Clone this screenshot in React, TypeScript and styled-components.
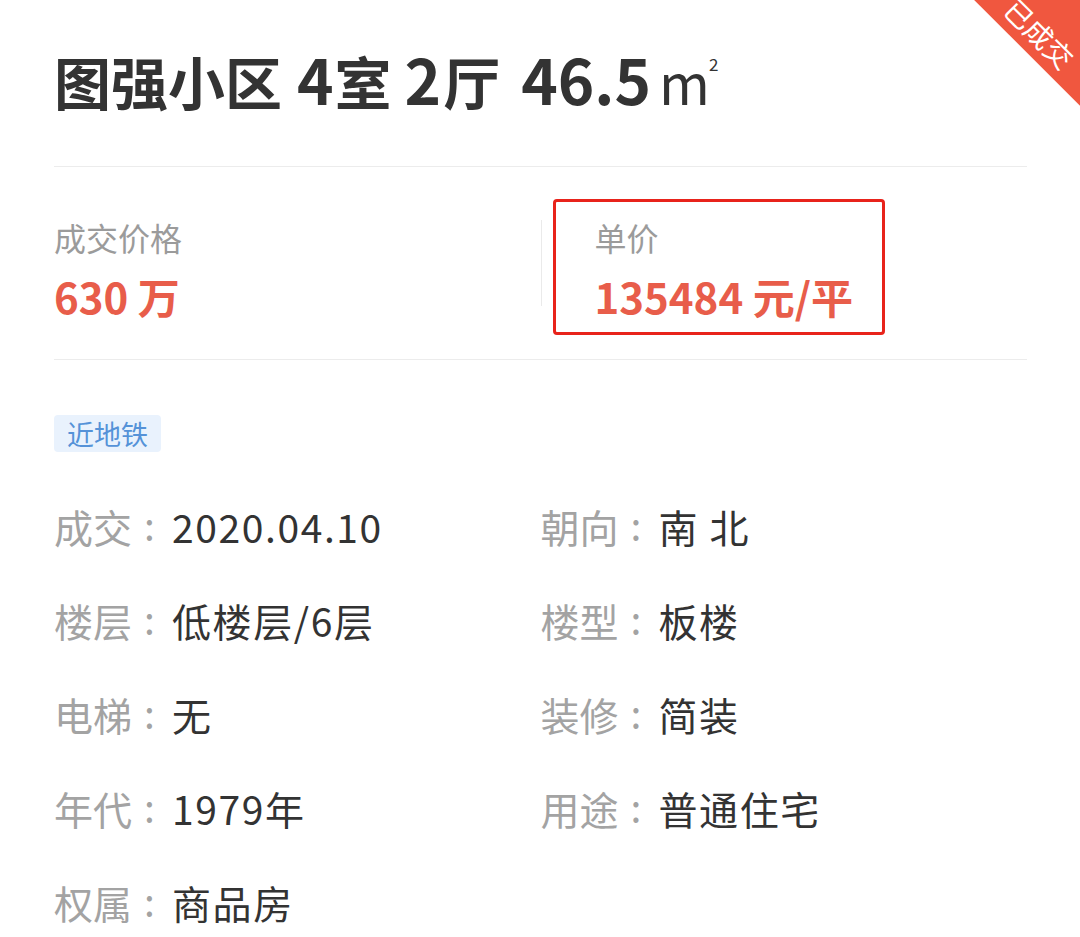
import React from "react";
import styled, { createGlobalStyle } from "styled-components";

const Global = createGlobalStyle`
  html, body { margin: 0; padding: 0; background: #ffffff; }
  body { font-family: "Noto Sans CJK SC", "Noto Sans", sans-serif; color: #333; }
`;

const Page = styled.div`
  position: relative;
  width: 1080px;
  min-height: 937px;
  overflow: hidden;
  background: #fff;
`;

const Content = styled.div`
  margin: 0 53px 0 54px;
`;

const Header = styled.div`
  height: 167px;
  box-sizing: border-box;
  padding-bottom: 8px;
  display: flex;
  align-items: center;
  border-bottom: 1px solid #ececec;
`;

const Title = styled.h1`
  margin: 0;
  font-size: 57px;
  line-height: 66px;
  font-weight: 700;
  color: #333;
  white-space: nowrap;
`;

const Num = styled.span`
  font-size: 62px;
`;

const Gap = styled.span<{ $w: number }>`
  display: inline-block;
  width: ${(p) => p.$w}px;
`;

const Unit = styled.span`
  font-size: 55px;
  font-weight: 400;
`;

const Sup = styled.sup`
  font-size: 17px;
  font-weight: 400;
  vertical-align: top;
  position: relative;
  top: -14px;
  margin-left: -1px;
`;

const Stats = styled.div`
  height: 193px;
  box-sizing: border-box;
  padding-top: 50px;
  display: grid;
  grid-template-columns: 1fr 1fr;
  align-items: start;
  border-bottom: 1px solid #ececec;
`;

const StatCell = styled.div<{ $divided?: boolean; $marked?: boolean }>`
  position: relative;
  padding-left: ${(p) => (p.$divided ? "54px" : "0")};
  &::before {
    content: "";
    display: ${(p) => (p.$divided ? "block" : "none")};
    position: absolute;
    left: 0;
    top: 3px;
    height: 86px;
    border-left: 1px solid #eaeaea;
  }
  &::after {
    content: "";
    display: ${(p) => (p.$marked ? "block" : "none")};
    position: absolute;
    left: 12px;
    top: -18px;
    width: 332px;
    height: 136px;
    box-sizing: border-box;
    border: 3px solid #e8231b;
    border-radius: 4px;
  }
`;

const StatLabel = styled.div`
  font-size: 32px;
  line-height: 40px;
  color: #9b9b9b;
`;

const StatValue = styled.div`
  margin-top: 14px;
  font-size: 42px;
  line-height: 50px;
  font-weight: 700;
  color: #e85d4a;
  white-space: nowrap;
`;

const Tag = styled.span`
  display: inline-flex;
  align-items: center;
  margin-top: 55px;
  height: 37px;
  padding: 0 13px;
  border-radius: 4px;
  background: #e9f2fd;
  color: #5592d8;
  font-size: 27px;
`;

const Info = styled.div`
  margin-top: 27px;
  display: grid;
  grid-template-columns: 1fr 1fr;
`;

const Row = styled.div`
  display: flex;
  align-items: center;
  height: 94px;
  font-size: 39px;
  white-space: nowrap;
`;

const Key = styled.span`
  display: inline-flex;
  align-items: center;
  width: 118px;
  flex: none;
  color: #a3a3a3;
`;

const Colon = styled.span`
  margin-left: 12px;
  position: relative;
  top: -2px;
`;

const Val = styled.span`
  color: #333;
  letter-spacing: 1.6px;
`;

const Corner = styled.div`
  position: absolute;
  top: 0;
  right: 0;
  width: 140px;
  height: 130px;
  overflow: hidden;
  pointer-events: none;
`;

const Ribbon = styled.div`
  position: absolute;
  left: -4px;
  top: -53px;
  width: 260px;
  height: 120px;
  box-sizing: border-box;
  padding-bottom: 8px;
  background: #f0573f;
  color: #fff;
  font-size: 28px;
  line-height: 30px;
  display: flex;
  align-items: flex-end;
  justify-content: center;
  transform: rotate(45deg);
`;

const rows: [string, string][] = [
  ["成交", "2020.04.10"],
  ["朝向", "南 北"],
  ["楼层", "低楼层/6层"],
  ["楼型", "板楼"],
  ["电梯", "无"],
  ["装修", "简装"],
  ["年代", "1979年"],
  ["用途", "普通住宅"],
  ["权属", "商品房"],
];

export default function App() {
  return (
    <Page>
      <Global />
      <Corner>
        <Ribbon>已成交</Ribbon>
      </Corner>
      <Content>
        <Header>
          <Title>
            图强小区
            <Gap $w={15} />
            <Num>4</Num>
            <Gap $w={1} />室<Gap $w={13} />
            <Num>2</Num>
            <Gap $w={2} />厅<Gap $w={21} />
            <Num>46.5</Num>
            <Gap $w={8} />
            <Unit>m</Unit>
            <Sup>2</Sup>
          </Title>
        </Header>
        <Stats>
          <StatCell>
            <StatLabel>成交价格</StatLabel>
            <StatValue>630 万</StatValue>
          </StatCell>
          <StatCell $divided $marked>
            <StatLabel>单价</StatLabel>
            <StatValue>135484 元/平</StatValue>
          </StatCell>
        </Stats>
        <Tag>近地铁</Tag>
        <Info>
          {rows.map(([k, v]) => (
            <Row key={k}>
              <Key>
                {k}
                <Colon>:</Colon>
              </Key>
              <Val>{v}</Val>
            </Row>
          ))}
        </Info>
      </Content>
    </Page>
  );
}
